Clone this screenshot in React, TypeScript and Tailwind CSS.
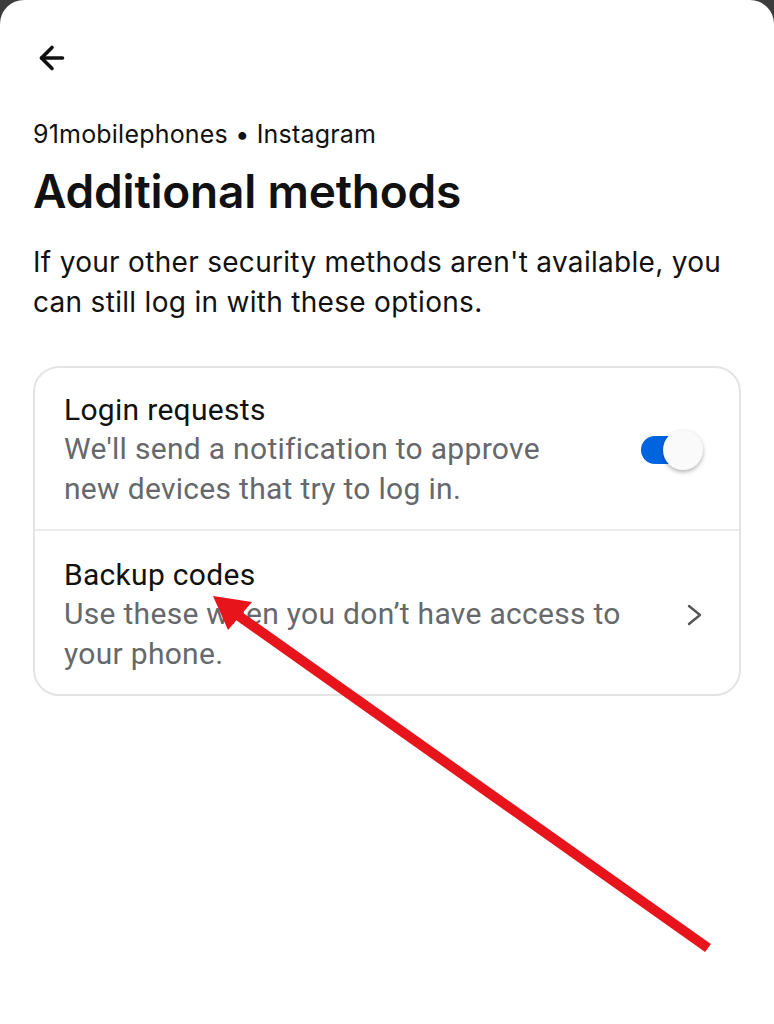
import { ArrowLeft } from 'lucide-react'

function Toggle() {
  return (
    <div className="relative h-[42px] w-[64px] shrink-0">
      <div className="absolute left-[2px] top-[7px] h-[28px] w-[54px] rounded-full bg-[#0064e0]" />
      <div className="absolute right-0 top-[1px] h-[40px] w-[40px] rounded-full bg-[#fafafa] shadow-[0_2px_4px_rgba(0,0,0,0.3)]" />
    </div>
  )
}

export default function App() {
  return (
    <div className="relative h-[1024px] w-full overflow-hidden bg-[#3c3c3c] font-['Inter',sans-serif]">
      <div className="h-full rounded-t-[24px] bg-white px-[33px] pt-[40px]">
        <ArrowLeft className="ml-[1px] h-[36px] w-[36px] text-[#111]" strokeWidth={2.4} />

        <p className="mt-[42px] text-[25px] leading-[32px] tracking-[0.2px] text-[#111]">
          91mobilephones • Instagram
        </p>
        <h1 className="mt-[14px] text-[46px] leading-[54px] font-semibold tracking-[-0.2px] text-[#111]">
          Additional methods
        </h1>
        <p className="mt-[24px] text-[28px] leading-[40px] tracking-[0.3px] text-[#111]">
          If your other security methods aren't available, you can still log in with these options.
        </p>

        <div className="mt-[44px] overflow-hidden rounded-[26px] border-2 border-[#e4e4e4] font-['Roboto',sans-serif]">
          <div className="flex items-center gap-4 border-b-2 border-[#ececec] pl-[29px] pr-[36px] pt-[23px] pb-[20px]">
            <div className="flex-1 tracking-[0.3px]">
              <p className="text-[30px] leading-[38px] text-[#111]">Login requests</p>
              <p className="text-[30px] leading-[40px] text-[#65686c]">
                We'll send a notification to approve
                <br />
                new devices that try to log in.
              </p>
            </div>
            <Toggle />
          </div>
          <div className="flex items-center gap-4 pl-[29px] pr-[36px] pt-[25px] pb-[20px]">
            <div className="flex-1 tracking-[0.3px]">
              <p className="text-[30px] leading-[38px] text-[#111]">Backup codes</p>
              <p className="text-[30px] leading-[40px] text-[#65686c]">
                Use these when you don’t have access to
                <br />
                your phone.
              </p>
            </div>
            <svg className="h-[22px] w-[16px] shrink-0" viewBox="0 0 16 22" fill="none">
              <polyline points="2,2 13,11 2,20" stroke="#555" strokeWidth="2.4" strokeLinecap="round" strokeLinejoin="round" />
            </svg>
          </div>
        </div>
      </div>

      <svg className="pointer-events-none absolute inset-0 h-full w-full" viewBox="0 0 774 1024">
        <line x1="708" y1="948" x2="236" y2="614" stroke="#e8141b" strokeWidth="10" />
        <polygon points="213,596 252,602 228,630" fill="#e8141b" />
      </svg>
    </div>
  )
}
